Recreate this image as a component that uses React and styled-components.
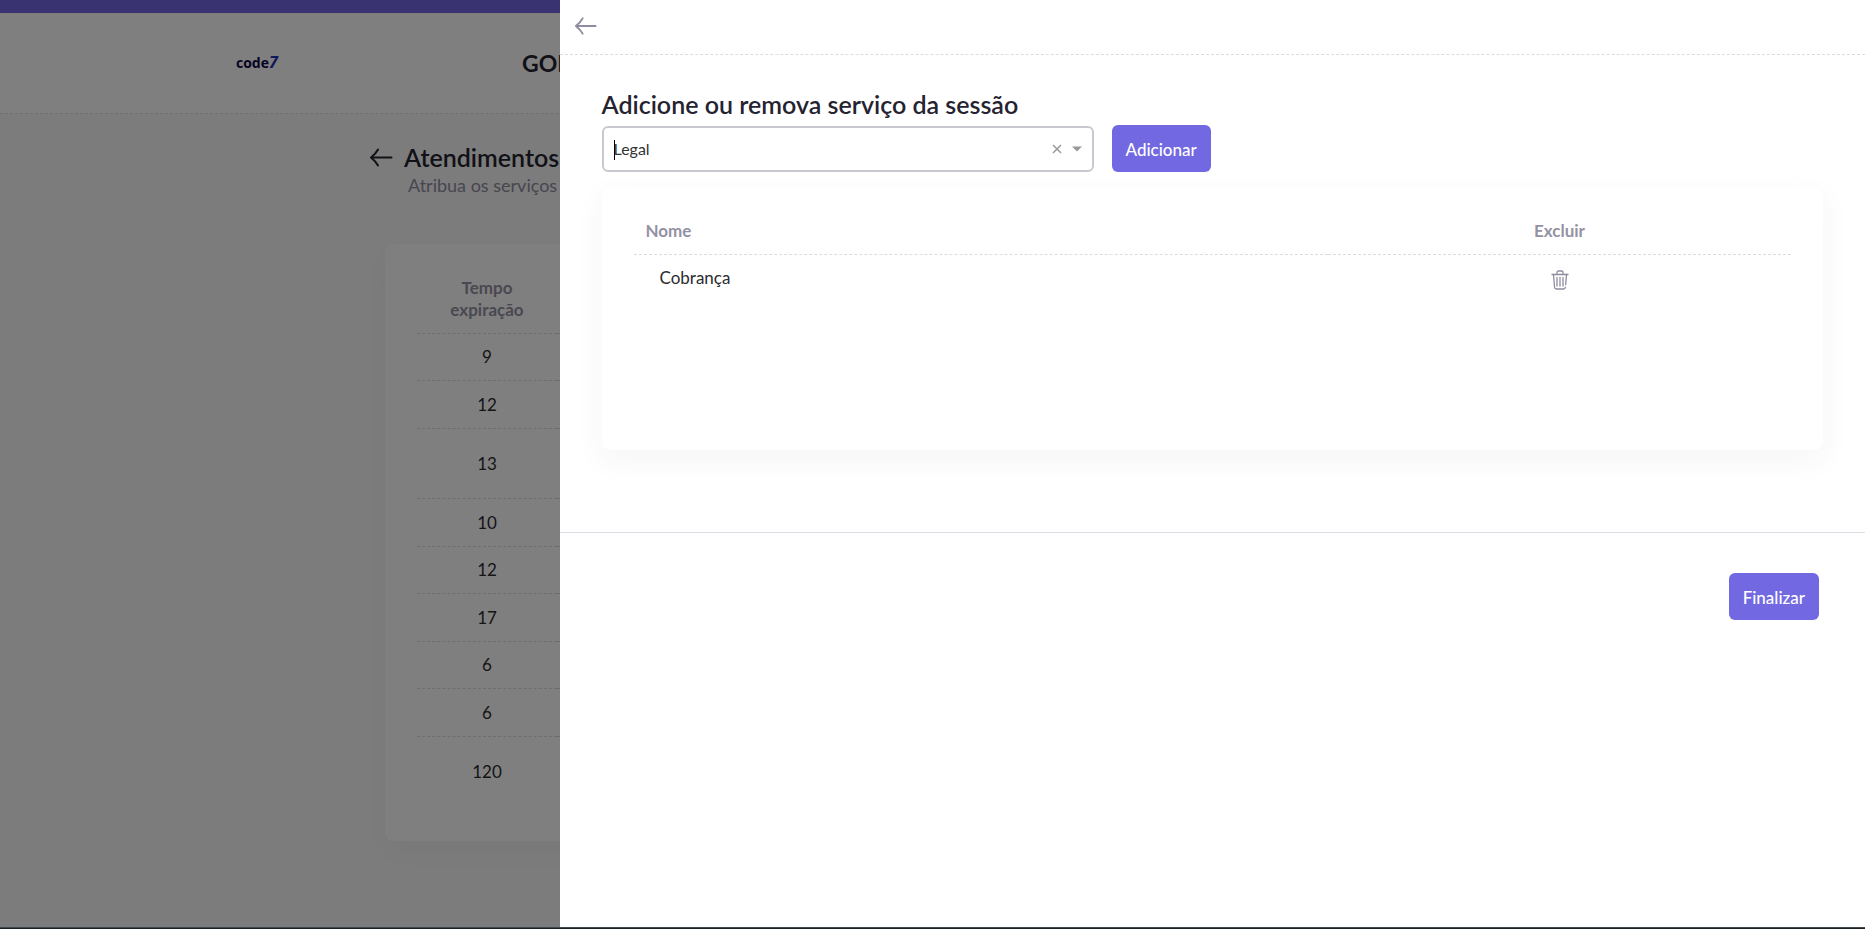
import React, { useState } from "react";
import styled, { createGlobalStyle } from "styled-components";

const GlobalStyle = createGlobalStyle`
  * {
    box-sizing: border-box;
  }
  body {
    margin: 0;
    font-family: Lato, "Liberation Sans", sans-serif;
    font-size: 17px;
    line-height: 22px;
    color: #2b2b2f;
  }
  h1, h2, p {
    margin: 0;
  }
`;

const Screen = styled.div`
  display: flex;
  flex-direction: column;
  height: 100vh;
`;

const Stage = styled.div`
  position: relative;
  flex: 1;
  overflow: hidden;
  background-color: #f9f9f9;
`;

const BottomEdge = styled.div`
  height: 2px;
  border-top: 1px solid #42494e;
  background-color: #1b2226;
`;

const Header = styled.header`
  display: flex;
  align-items: center;
  height: 114px;
  padding: 0 236px;
  border-top: 13px solid #7269e2;
  border-bottom: 1px dashed #dcdce0;
  background-color: #fff;
`;

const Logo = styled.div`
  width: 286px;
  padding-bottom: 2px;
  font-family: "Open Sans", sans-serif;
  font-size: 14px;
  font-weight: 700;
  color: #0c0645;
`;

const LogoSeven = styled.span`
  font-size: 16px;
  font-style: italic;
  color: #2330b0;
`;

const CompanyName = styled.h1`
  font-size: 23px;
  line-height: 32px;
  font-weight: 700;
  color: #25232f;
`;

const Main = styled.main`
  padding: 26px 369px 0;
`;

const PageTitleRow = styled.div`
  display: flex;
  align-items: center;
  gap: 11px;
`;

const PageTitle = styled.h2`
  font-size: 25px;
  line-height: 34px;
  font-weight: 600;
  color: #25232f;
`;

const Subtitle = styled.p`
  padding-left: 39px;
  font-size: 18px;
  line-height: 22px;
  color: #8f8c9f;
`;

const Card = styled.section`
  padding: 20px 32px 34px;
  border-radius: 8px;
  background-color: #fff;
  box-shadow: 0 10px 30px rgba(82, 63, 105, 0.05);
`;

const PageCard = styled(Card)`
  margin: 48px 16px 0;
`;

const DrawerCard = styled(Card)`
  min-height: 263px;
  margin-top: 15px;
`;

const Table = styled.table`
  width: 100%;
  border-collapse: separate;
  border-spacing: 0;
  table-layout: fixed;
`;

const HeadCell = styled.th`
  width: ${({ $width }) => $width};
  padding: 13px 12px 12px;
  border-bottom: 1px dashed #dcdce0;
  text-align: ${({ $align }) => $align || "center"};
  font-size: 17px;
  font-weight: 700;
  color: #9491a4;
`;

const SessionRow = styled.tr`
  height: ${({ $tall }) => ($tall ? "70px" : "47px")};
  &:nth-child(even) {
    height: 48px;
  }
  &:last-child {
    height: 70px;
  }
  &:last-child td {
    border-bottom: none;
  }
`;

const SessionCell = styled.td`
  padding: 0 12px;
  border-bottom: 1px dashed #dcdce0;
  text-align: center;
`;

const ServiceCell = styled.td`
  padding: ${({ $align }) => ($align ? "12px" : "12px 26px")};
  text-align: ${({ $align }) => $align || "left"};
`;

const Backdrop = styled.div`
  position: absolute;
  inset: 0;
  display: flex;
  justify-content: flex-end;
  background-color: rgba(0, 0, 0, 0.5);
`;

const Drawer = styled.aside`
  width: 70%;
  overflow-y: auto;
  background-color: #fff;
`;

const DrawerHeader = styled.div`
  display: flex;
  align-items: flex-start;
  height: 55px;
  padding: 14px 14px 13px;
  border-bottom: 1px dashed #dcdce0;
`;

const DrawerBody = styled.div`
  padding: 32px 42px 0;
`;

const DrawerTitle = styled.h2`
  font-size: 25px;
  line-height: 34px;
  font-weight: 600;
  color: #25232f;
`;

const IconButton = styled.button`
  display: inline-flex;
  padding: 0;
  border: none;
  background: none;
  color: ${({ $color }) => $color || "#8f8c9f"};
  vertical-align: middle;
  cursor: pointer;
`;

const FormRow = styled.form`
  display: flex;
  align-items: center;
  gap: 18px;
  padding-top: 4px;
`;

const SelectBox = styled.div`
  position: relative;
  display: flex;
  align-items: center;
  gap: 10px;
  width: 38%;
  min-width: 492px;
  height: 46px;
  padding: 0 10px;
  border: 2px solid #c9c7d0;
  border-radius: 6px;
`;

const ServiceSelect = styled.select`
  flex: 1;
  height: 100%;
  padding: 0;
  border: none;
  outline: none;
  appearance: none;
  background: none;
  font-family: inherit;
  font-size: 16px;
  color: #333;
`;

const TextCursor = styled.span`
  position: absolute;
  left: 10px;
  top: 12px;
  width: 1px;
  height: 20px;
  background-color: #000;
`;

const PrimaryButton = styled.button`
  height: 47px;
  padding: 2px 14px 0;
  border: none;
  border-radius: 6px;
  background-color: #7269e2;
  color: #fff;
  font-family: inherit;
  font-size: 17px;
  font-weight: 500;
  cursor: pointer;
`;

const DrawerFooter = styled.footer`
  display: flex;
  justify-content: flex-end;
  margin-top: 82px;
  padding: 40px 46px;
  border-top: 1px solid #dcdce4;
`;

const ArrowIcon = ({ size, color }) => (
  <svg
    width={size}
    height={size}
    viewBox="0 0 24 24"
    fill="none"
    stroke={color}
    strokeWidth="2"
    strokeLinecap="round"
    strokeLinejoin="round"
  >
    <path d="M22.500 12.500H2M9 4.500C7.500 7.500 5 10 2 12.500c3 2.500 5.500 5 7 8" />
  </svg>
);

const TrashIcon = () => (
  <svg
    width="18"
    height="20"
    viewBox="0 0 18 20"
    fill="none"
    stroke="currentColor"
    strokeWidth="1.3"
    strokeLinecap="round"
    strokeLinejoin="round"
  >
    <path d="M1 4.500H17M6 4.500V2.500Q6 1 7.500 1H10.500Q12 1 12 2.500V4.500" />
    <path d="M2.500 4.500L3.500 17Q3.700 19 5.500 19H12.500Q14.100 19 14.400 17.200M15.500 4.500L14.700 14.500" />
    <path d="M6 7.500V16M9 7.500V16M12 7.500V16" />
  </svg>
);

const ClearIcon = () => (
  <svg width="10" height="10" viewBox="0 0 10 10" stroke="currentColor" strokeWidth="1.5">
    <path d="M1 1L9 9M9 1L1 9" />
  </svg>
);

const CaretIcon = () => (
  <svg width="10" height="6" viewBox="0 0 10 6" fill="#999">
    <path d="M0 0.500H10L5 5.500Z" />
  </svg>
);

const sessions = [
  { id: 1, expiration: 9 },
  { id: 2, expiration: 12 },
  { id: 3, expiration: 13, tall: true },
  { id: 4, expiration: 10 },
  { id: 5, expiration: 12 },
  { id: 6, expiration: 17 },
  { id: 7, expiration: 6 },
  { id: 8, expiration: 6 },
  { id: 9, expiration: 120 },
];

const SessionsPage = () => (
  <>
    <Header>
      <Logo>
        code<LogoSeven>7</LogoSeven>
      </Logo>
      <CompanyName>GOL</CompanyName>
    </Header>
    <Main>
      <PageTitleRow>
        <ArrowIcon size={24} color="#25232f" />
        <PageTitle>Atendimentos</PageTitle>
      </PageTitleRow>
      <Subtitle>Atribua os serviços</Subtitle>
      <PageCard>
        <Table>
          <thead>
            <tr>
              <HeadCell $width="140px">Tempo expiração</HeadCell>
              <HeadCell />
            </tr>
          </thead>
          <tbody>
            {sessions.map((session) => (
              <SessionRow key={session.id} $tall={session.tall}>
                <SessionCell>{session.expiration}</SessionCell>
                <SessionCell />
              </SessionRow>
            ))}
          </tbody>
        </Table>
      </PageCard>
    </Main>
  </>
);

const App = () => {
  const [selected, setSelected] = useState("Legal");
  const [services, setServices] = useState(["Cobrança"]);

  const handleAdd = (e) => {
    e.preventDefault();
    if (!selected || services.includes(selected)) return;
    setServices((preVal) => [...preVal, selected]);
  };

  const handleDelete = (name) => {
    setServices((preVal) => preVal.filter((item) => item !== name));
  };

  return (
    <Screen>
      <GlobalStyle />
      <Stage>
        <SessionsPage />
        <Backdrop>
          <Drawer>
            <DrawerHeader>
              <IconButton type="button" aria-label="Voltar">
                <ArrowIcon size={23} color="currentColor" />
              </IconButton>
            </DrawerHeader>
            <DrawerBody>
              <DrawerTitle id="service-title">
                Adicione ou remova serviço da sessão
              </DrawerTitle>
              <FormRow onSubmit={handleAdd}>
                <SelectBox>
                  <ServiceSelect
                    aria-labelledby="service-title"
                    value={selected}
                    onChange={(e) => setSelected(e.target.value)}
                  >
                    <option value="" />
                    <option value="Legal">Legal</option>
                  </ServiceSelect>
                  <TextCursor />
                  <IconButton
                    type="button"
                    aria-label="Limpar"
                    $color="#999"
                    onClick={() => setSelected("")}
                  >
                    <ClearIcon />
                  </IconButton>
                  <CaretIcon />
                </SelectBox>
                <PrimaryButton type="submit">Adicionar</PrimaryButton>
              </FormRow>
              <DrawerCard>
                <Table>
                  <thead>
                    <tr>
                      <HeadCell $width="60%" $align="left">
                        Nome
                      </HeadCell>
                      <HeadCell $width="40%">Excluir</HeadCell>
                    </tr>
                  </thead>
                  <tbody>
                    {services.map((name) => (
                      <tr key={name}>
                        <ServiceCell>{name}</ServiceCell>
                        <ServiceCell $align="center">
                          <IconButton
                            type="button"
                            aria-label={`Excluir ${name}`}
                            onClick={() => handleDelete(name)}
                          >
                            <TrashIcon />
                          </IconButton>
                        </ServiceCell>
                      </tr>
                    ))}
                  </tbody>
                </Table>
              </DrawerCard>
            </DrawerBody>
            <DrawerFooter>
              <PrimaryButton type="button">Finalizar</PrimaryButton>
            </DrawerFooter>
          </Drawer>
        </Backdrop>
      </Stage>
      <BottomEdge />
    </Screen>
  );
};

export default App;
